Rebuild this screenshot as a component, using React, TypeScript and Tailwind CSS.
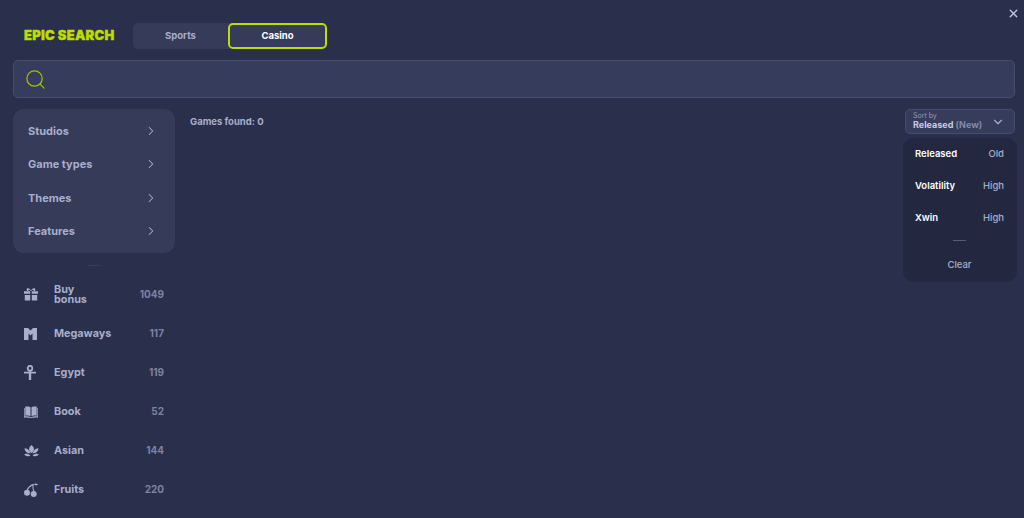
import { ChevronRight, ChevronDown, X, Search } from "lucide-react";
import { ReactNode } from "react";

const Gift = () => (
  <svg width="14" height="13" viewBox="0 0 14 13" fill="currentColor"><path d="M0 3.2h6.2v2.6H0zM7.8 3.2H14v2.6H7.8zM.8 7h5.4v5.4H.8zM7.8 7h5.4v5.4H7.8z" /><path d="M3.2 3C1.6 1.2 3.4-.4 5 .6c1 .6 2 1.8 2 2.4 0-.6 1-1.8 2-2.4 1.6-1 3.4.6 1.8 2.4H9.2c.8-.8.4-1.6-.3-1.2-.6.4-1.400 1-1.600 1.200H6.700C6.500 2.800 5.700 2.200 5.100 1.800c-.7-.4-1.100.4-.3 1.200z" /></svg>
);
const MegaIcon = () => (
  <svg width="13" height="12" viewBox="0 0 13 12" fill="currentColor"><path d="M0 0h4l2.500 2.500L9 0h4v12H8.500V5.500l-2 2-2-2V12H0z" /></svg>
);
const Ankh = () => (
  <svg width="12" height="15" viewBox="0 0 12 15" fill="none" stroke="currentColor" strokeWidth="1.800"><ellipse cx="6" cy="3.200" rx="2.300" ry="2.400" /><path d="M0 7.600h12" /><path d="M6 6v9" strokeWidth="2.400" /></svg>
);
const BookIcon = () => (
  <svg width="14" height="12" viewBox="0 0 14 12" fill="currentColor"><path d="M1.300.6C3 .2 5.300.3 6.500 1.300v9C5.300 9.500 3 9.300 1.300 9.700z" /><path d="M12.700.6C11 .2 8.700.3 7.500 1.300v9c1.200-.8 3.500-1 5.200-.6z" /><path d="M0 2h.7v8.500c2-.4 4.300-.3 6.300.8 2-1.100 4.300-1.200 6.300-.8V2h.7v9.700c-2.300-.4-4.700-.1-7 .3-2.300-.4-4.700-.7-7-.3z" /></svg>
);
const Lotus = () => (
  <svg width="15" height="12" viewBox="0 0 15 12" fill="currentColor"><path d="M7.500 0c1.600 1.200 2.500 2.800 2.500 4.300 0 1.300-1.200 2.700-2.500 3.700C6.200 7 5 5.600 5 4.300 5 2.800 5.900 1.200 7.500 0z" /><path d="M.5 3.200c2.200 0 4 1.200 5 3 .4.700.8 1.300 1.300 2-3.400.4-6-1.400-6.300-5zM14.500 3.200c-2.200 0-4 1.200-5 3-.4.700-.8 1.300-1.300 2 3.400.4 6-1.400 6.300-5z" /><path d="M0 9.300c2.200-1 4.800-.5 6.400 1.100C4.600 11.900 1.600 11.500 0 9.300zM15 9.300c-2.200-1-4.800-.5-6.400 1.100 1.800 1.500 4.800 1.100 6.400-1.100z" /></svg>
);
const Cherry = () => (
  <svg width="14" height="14" viewBox="0 0 14 14" fill="currentColor"><circle cx="3" cy="9.800" r="3" /><circle cx="9.700" cy="11" r="3" /><path d="M2.600 7.200C3.500 4.200 6 1.800 9.500.8l.3.900C9.200 3.500 9.400 5.800 10.400 8l-1 .3C8.500 6.300 8.200 4.200 8.600 2.500 6.400 3.700 4.500 5.200 3.700 7.500z" /><path d="M9.800 1.200c1.300-1 3-.9 4.200.2-1.300 1.200-3.200 1.200-4.200-.2z" /></svg>
);

const filters = ["Studios", "Game types", "Themes", "Features"];
const cats: { icon: ReactNode; label: ReactNode; n: number }[] = [
  { icon: <Gift />, label: <>Buy<br />bonus</>, n: 1049 },
  { icon: <MegaIcon />, label: "Megaways", n: 117 },
  { icon: <Ankh />, label: "Egypt", n: 119 },
  { icon: <BookIcon />, label: "Book", n: 52 },
  { icon: <Lotus />, label: "Asian", n: 144 },
  { icon: <Cherry />, label: "Fruits", n: 220 },
];
const sorts = [["Released", "Old"], ["Volatility", "High"], ["Xwin", "High"]];

export default function App() {
  return (
    <div className="relative w-[1024px] h-[518px] overflow-hidden bg-[#2a2f4b] pl-[13px] pr-[9px] pt-[23px] font-['Inter','Liberation_Sans',sans-serif] font-bold text-[#a9aecb]">
      <button className="absolute right-[4px] top-[7px] text-[#c0c5df]"><X size={13} strokeWidth={2.5} /></button>

      <div className="flex items-center h-[26px]">
        <div className="w-[120px] pl-[11px] text-[#bddc00] text-[13px] font-black tracking-[0.25px] whitespace-nowrap [-webkit-text-stroke:0.4px_#bddc00]">EPIC SEARCH</div>
        <div className="flex w-[194px] h-[26px] rounded-[5px] bg-[#353b59] text-[9.500px]">
          <div className="flex-1 flex items-center justify-center text-[#a9aecb]">Sports</div>
          <div className="w-[99px] flex items-center justify-center rounded-[5px] border-2 border-[#bddc00] text-white">Casino</div>
        </div>
      </div>

      <div className="mt-[11px] h-[38px] rounded-[5px] bg-[#363c5b] border border-[#474d6e] flex items-center pl-[10px]">
        <Search size={23} strokeWidth={1.300} className="text-[#a3c000]" />
      </div>

      <div className="mt-[11px] flex">
        <aside className="w-[162px] shrink-0">
          <div className="h-[144px] rounded-[11px] bg-[#353b59] px-[15px] py-[5px] flex flex-col">
            {filters.map((f) => (
              <div key={f} className="flex-1 flex items-center justify-between text-[11px]">
                <span>{f}</span>
                <ChevronRight size={14} strokeWidth={1.800} className="mr-[2px]" />
              </div>
            ))}
          </div>
          <div className="mx-auto mt-[12px] w-[14px] h-px bg-[#363c5b]" />
          <div className="mt-[9px] flex flex-col">
            {cats.map((c) => (
              <div key={c.n} className="h-[39px] flex items-center px-[11px] text-[10.800px]">
                <span className="w-[30px] flex justify-start">{c.icon}</span>
                <span className="flex-1 leading-[10px]">{c.label}</span>
                <span className="text-[10px] text-[#7d83a3]">{c.n}</span>
              </div>
            ))}
          </div>
        </aside>

        <main className="flex-1 flex justify-between pl-[15px]">
          <div className="pt-[6px] text-[9.500px] leading-[13px]">Games found: 0</div>
          <div className="relative w-[110px] h-[25px] rounded-[5px] bg-[#363c5b] border border-[#474d6e] pl-[7px] flex items-center justify-between pr-[9px]">
            <div className="flex flex-col mb-[2px]">
              <span className="text-[7px] leading-[8px] font-normal text-[#9499b8]">Sort by</span>
              <span className="text-[9px] leading-[10px] whitespace-nowrap text-[#c9cde3]">Released <span className="text-[#8288a9]">(New)</span></span>
            </div>
            <ChevronDown size={14} strokeWidth={2} />
            <div className="absolute -left-[3px] top-[28px] w-[114px] h-[144px] rounded-[11px] bg-[#232840] pl-[12px] pr-[13px] flex flex-col">
              {sorts.map(([a, b]) => (
                <div key={a} className="h-[32px] flex items-center justify-between text-[9.500px]">
                  <span className="text-white font-semibold">{a}</span>
                  <span className="font-medium text-[#a9aecb]">{b}</span>
                </div>
              ))}
              <div className="mx-auto mt-[6px] w-[13px] h-px bg-[#555b7b]" />
              <div className="mt-[18px] text-center text-[9.500px] leading-[12px] font-medium text-[#a9aecb]">Clear</div>
            </div>
          </div>
        </main>
      </div>
    </div>
  );
}
